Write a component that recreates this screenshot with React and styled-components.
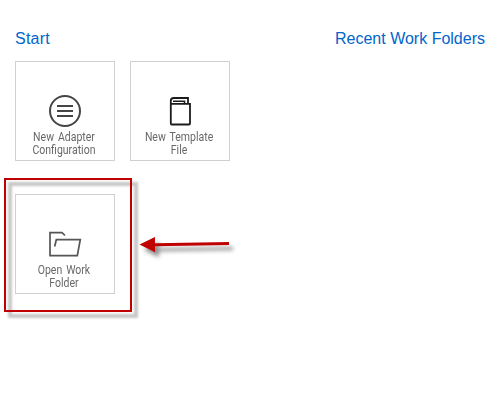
import React from "react";
import styled, { createGlobalStyle } from "styled-components";

const GlobalStyle = createGlobalStyle`
  * { box-sizing: border-box; }
  body { margin: 0; background: #fff; }
`;

const Page = styled.main`
  position: relative;
  isolation: isolate;
  display: grid;
  grid-template-columns: 320px 1fr;
  width: 503px;
  height: 412px;
  padding: 29px 0 0 15px;
  background: #fff;
  overflow: hidden;
`;

const Section = styled.section`
  display: flex;
  flex-direction: column;
  gap: 12px;
`;

const Heading = styled.h2`
  margin: 0;
  font: 400 16px/20px "Liberation Sans", Arial, sans-serif;
  letter-spacing: ${(p) => p.$spacing || "0"};
  color: #0066cc;
  white-space: nowrap;
`;

const Tiles = styled.div`
  display: grid;
  grid-template-columns: 100px 100px;
  grid-auto-rows: 100px;
  gap: 33px 15px;
`;

const Tile = styled.button`
  display: flex;
  flex-direction: column;
  align-items: center;
  padding: 31px 0 0;
  border: 1px solid #d0d0d0;
  background: #fff;
`;

const Icon = styled.svg`
  display: block;
  flex: none;
  width: 36px;
  height: 36px;
  fill: none;
  stroke: ${(p) => p.$color};
  stroke-width: 2;
`;

const Label = styled.span`
  margin: 2px 2px 0 0;
  font: 400 12px/13px Roboto, sans-serif;
  word-spacing: 1.5px;
  transform: scaleX(0.875);
  color: #686868;
  text-align: center;
  white-space: nowrap;
`;

const Highlight = styled.div`
  position: absolute;
  left: 4px;
  top: 178px;
  width: 128px;
  height: 134px;
  border: 2px solid #c00000;
  pointer-events: none;

  &::before {
    content: "";
    position: absolute;
    z-index: -1;
    inset: 2px -8px -8px 2px;
    border: 4px solid rgba(0, 0, 0, 0.22);
    filter: blur(1.3px);
  }
`;

const Arrow = styled.svg`
  position: absolute;
  left: 135px;
  top: 230px;
  width: 105px;
  height: 32px;
  fill: #c00000;
  filter: drop-shadow(4px 5px 2px rgba(0, 0, 0, 0.45));
`;

export default function App() {
  return (
    <Page>
      <GlobalStyle />
      <Section>
        <Heading $spacing="0.25px">Start</Heading>
        <Tiles>
          <Tile>
            <Icon viewBox="47 93 36 36" $color="#454545">
              <circle cx="65" cy="111" r="15" />
              <path d="M57 106h16M57 111h16M57 116h16" />
            </Icon>
            <Label>New Adapter<br />Configuration</Label>
          </Tile>
          <Tile>
            <Icon viewBox="162 93 36 36" $color="#1c1c1c">
              <path d="M170.800 103.800H190V123.500a1 1 0 0 1-1 1H171.800a1 1 0 0 1-1-1V101a3 3 0 0 1 3-3H188V103" strokeWidth="1.8" />
              <path d="M173 101.200H184.500V103" strokeWidth="1.6" />
            </Icon>
            <Label>New Template<br />File</Label>
          </Tile>
          <Tile>
            <Icon viewBox="47 226 36 36" $color="#555">
              <path d="M65 235.500L62 232.700H50V255.700H77.300L80.300 239.700H56.300L54.700 246.500" strokeWidth="1.7" />
            </Icon>
            <Label>Open Work<br />Folder</Label>
          </Tile>
        </Tiles>
      </Section>
      <Section>
        <Heading>Recent Work Folders</Heading>
      </Section>
      <Highlight />
      <Arrow viewBox="135 230 105 32">
        <path d="M139.500 244.600L155 237V243.200L229 242V245L155 246.200V252.300Z" />
      </Arrow>
    </Page>
  );
}
